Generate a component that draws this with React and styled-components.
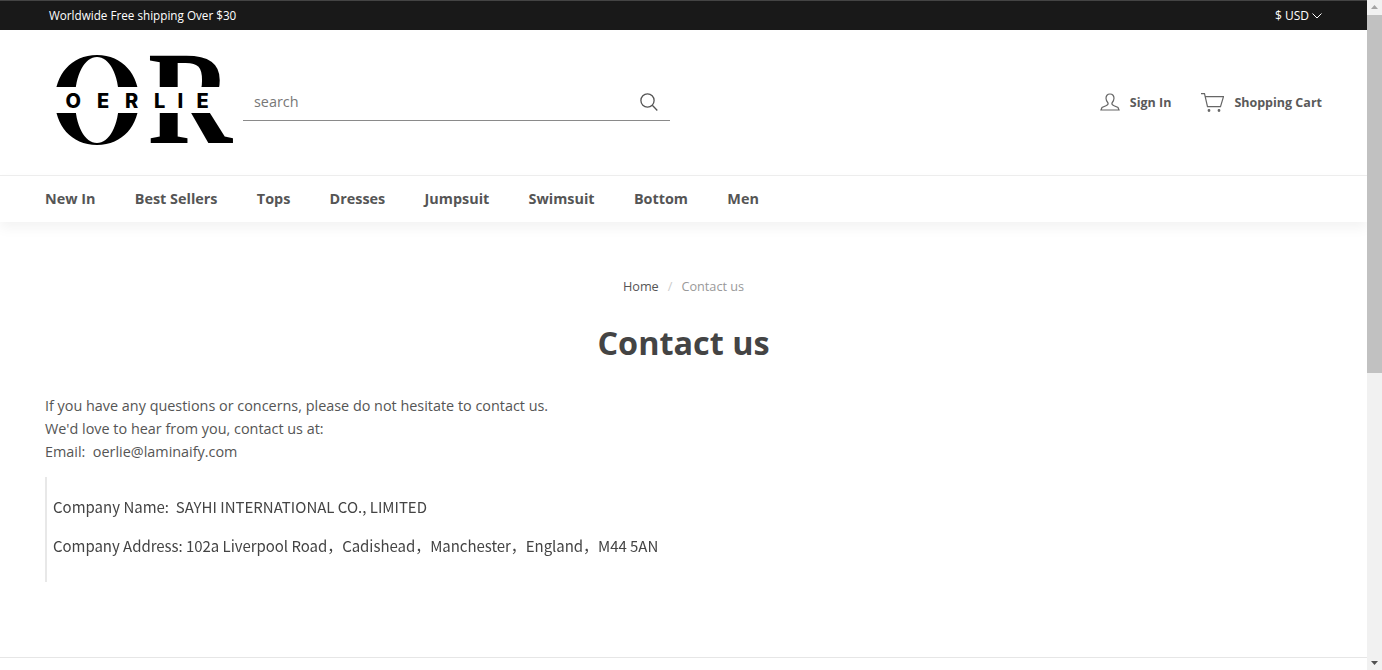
import React from "react";
import styled, { createGlobalStyle } from "styled-components";

const Global = createGlobalStyle`
  html, body { margin: 0; padding: 0; height: 100%; overflow: hidden; background: #fff; }
  body { font-family: "Open Sans", sans-serif; color: #444; }
  * { box-sizing: border-box; }
`;
const Page = styled.div`width: 1367px; height: 670px; overflow: hidden; display: flex; flex-direction: column;`;
const TopBar = styled.div`
  height: 30px; flex: none; background: #191919; border-top: 1px solid #444; color: #fff;
  font-size: 11.7px; display: flex; align-items: center; justify-content: space-between;
  padding: 0 45px 0 49px;
`;
const Promo = styled.span`padding-bottom: 2px;`;
const Currency = styled.div`display: flex; align-items: center; gap: 3px; font-size: 12px;`;
const Header = styled.header`
  height: 146px; flex: none; display: flex; align-items: center; padding: 0 45px 0 50px;
  border-bottom: 1px solid #eee;
`;
const Logo = styled.svg`width: 188px; height: 100px; flex: none; margin-top: -1px;`;
const SearchBox = styled.div`
  width: 427px; height: 38px; margin: -1px 0 0 5px; border-bottom: 1px solid #8a8a8a;
  display: flex; align-items: center; justify-content: space-between; padding: 0 11px;
`;
const SearchText = styled.span`font-size: 14.4px; color: #777;`;
const Actions = styled.div`margin: -1px 0 0 auto; display: flex; align-items: center; gap: 30px;`;
const Action = styled.a`
  display: flex; align-items: center; gap: 10px; font-size: 12.5px; font-weight: 700; color: #5a5a5a;
`;
const Nav = styled.nav`
  height: 46px; flex: none; display: flex; align-items: center; gap: 39.3px; padding: 0 45px 2px;
  box-shadow: 0 6px 12px rgba(0,0,0,.05);
`;
const NavItem = styled.a`font-size: 14.4px; font-weight: 700; color: #555;`;
const Main = styled.main`flex: 1; padding: 0 45px; display: flex; flex-direction: column;`;
const Crumbs = styled.div`
  margin-top: 55px; height: 18px; display: flex; justify-content: center; gap: 9px; font-size: 12.7px;
  line-height: 18px; color: #999;
`;
const CrumbLink = styled.span`color: #555;`;
const CrumbSep = styled.span`color: #ccc;`;
const Title = styled.h1`
  margin: 22px 0 0; text-align: center; font-size: 32.4px; line-height: 50px; font-weight: 700; color: #444;
`;
const Para = styled.p`margin: 27px 0 0; font-size: 14.4px; line-height: 23px; color: #555; white-space: pre-wrap;`;
const Company = styled.div`
  margin-top: 14px; height: 105px; border-left: 2px solid #e8e8e8; padding: 10px 0 0 6px;
  font-family: "Noto Sans CJK SC", "Noto Sans", sans-serif; font-size: 15px; line-height: 39px;
  color: #444; filter: blur(.35px); white-space: pre;
`;
const CompanyLine = styled.div`letter-spacing: ${(p) => p.$tight ? "-0.04px" : "0"};`;
const Footer = styled.div`height: 13px; flex: none; border-top: 1px solid #e6e6e6;`;
const Scrollbar = styled.div`
  position: fixed; top: 0; right: 0; width: 15px; height: 670px; background: #f1f1f1;
  display: flex; flex-direction: column; align-items: center; justify-content: space-between;
`;
const ScrollThumb = styled.div`position: absolute; top: 15px; left: 0; width: 15px; height: 358px; background: #c1c1c1;`;
const Arrow = styled.svg`width: 15px; height: 15px; flex: none;`;

export default function App() {
  return (
    <>
      <Global />
      <Page>
        <TopBar>
          <Promo>Worldwide Free shipping Over $30</Promo>
          <Currency>
            $ USD
            <svg width="10" height="6" viewBox="0 0 10 6" fill="none" stroke="#fff" strokeWidth="1"><path d="M.5.5 5 5 9.5.5" /></svg>
          </Currency>
        </TopBar>
        <Header>
          <Logo viewBox="0 0 188 100" aria-label="OERLIE logo">
            <path fillRule="evenodd" d="M47 3C21 3 5 23 5 48s16 45 42 45 42-20 42-45S73 3 47 3Zm0 2c-12 0-22 17-22 43s10 43 22 43 22-17 22-43S59 5 47 5Z" fill="#000" />
            <text x="98" y="91" fontFamily="Liberation Serif" fontWeight="700" fontSize="133" fill="#000" textLength="84" lengthAdjust="spacingAndGlyphs">R</text>
            <rect x="0" y="35" width="188" height="26" fill="#fff" />
            <text x="15.500 47 75 104 127.500 146.500" y="56" fontFamily="Inter" fontWeight="800" fontSize="20" fill="#000">OERLIE</text>
          </Logo>
          <SearchBox>
            <SearchText>search</SearchText>
            <svg width="20" height="20" viewBox="0 0 20 20" fill="none" stroke="#555" strokeWidth="1.3"><circle cx="8.5" cy="8.5" r="6.6" /><path d="m13.3 13.3 5 5.2" /></svg>
          </SearchBox>
          <Actions>
            <Action>
              <svg width="20" height="18" viewBox="0 0 20 18" fill="none" stroke="#666" strokeWidth="1.2"><path d="M10 1c-2.700 0-4 2-4 4.300 0 2 1 3.500 2 4.700.4 1-.5 2-2 2.700L2 14.500 1 17h18l-1-2.500-4-1.800c-1.500-.7-2.400-1.700-2-2.700 1-1.200 2-2.700 2-4.700C14 3 12.700 1 10 1Z" /></svg>
              Sign In
            </Action>
            <Action>
              <svg width="23" height="19" viewBox="0 0 23 19" fill="none" stroke="#666" strokeWidth="1.2"><path d="M0 .7h3.500l3 13h13L22.500 3.600H4.500" /><circle cx="8" cy="17.500" r=".8" fill="#666" /><circle cx="18" cy="17.500" r=".8" fill="#666" /></svg>
              Shopping Cart
            </Action>
          </Actions>
        </Header>
        <Nav>
          {["New In", "Best Sellers", "Tops", "Dresses", "Jumpsuit", "Swimsuit", "Bottom", "Men"].map((t) => (
            <NavItem key={t}>{t}</NavItem>
          ))}
        </Nav>
        <Main>
          <Crumbs>
            <CrumbLink>Home</CrumbLink>
            <CrumbSep>/</CrumbSep>
            <span>Contact us</span>
          </Crumbs>
          <Title>Contact us</Title>
          <Para>{"If you have any questions or concerns, please do not hesitate to contact us.\nWe'd love to hear from you, contact us at:\nEmail:  oerlie@laminaify.com"}</Para>
          <Company>
            <CompanyLine>{"Company Name:  SAYHI INTERNATIONAL CO., LIMITED"}</CompanyLine>
            <CompanyLine $tight>{"Company Address: 102a Liverpool Road，Cadishead，Manchester，England，M44 5AN"}</CompanyLine>
          </Company>
        </Main>
        <Footer />
      </Page>
      <Scrollbar>
        <ScrollThumb />
        <Arrow viewBox="0 0 15 15"><path d="M7.500 5 11 9H4Z" fill="#a3a3a3" /></Arrow>
        <Arrow viewBox="0 0 15 15"><path d="M7.500 10 11 6H4Z" fill="#505050" /></Arrow>
      </Scrollbar>
    </>
  );
}
